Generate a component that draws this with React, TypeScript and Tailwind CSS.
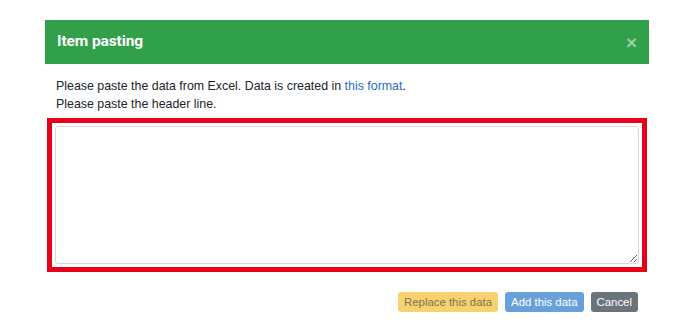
import React from 'react';

export default function App() {
  return (
    <div className="w-[700px] h-[326px] bg-white pl-[45px] pt-[20px] font-['Liberation_Sans',sans-serif]">
      <div className="w-[604px]">
        {/* Header */}
        <div className="h-[44px] bg-[#30a04a] flex items-center justify-between pl-[12px] pr-[12px]">
          <h5 className="text-white text-[15.5px] font-bold font-['Roboto','Liberation_Sans',sans-serif] tracking-[-0.1px]">
            Item pasting
          </h5>
          <button className="text-white/50 text-[19px] font-bold leading-none">
            ×
          </button>
        </div>

        {/* Body */}
        <div className="px-[11px] pt-[13px] text-[12.4px] leading-[18px] text-[#212529]">
          <p>
            Please paste the data from Excel. Data is created in{' '}
            <a href="#" className="text-[#1f6fc5]">this format</a>.
          </p>
          <p>Please paste the header line.</p>
          <div className="mt-[5px] ml-[-9px] mr-[-9px] border-[5px] border-[#e60019] p-[3px]">
            <textarea className="block w-full h-[138px] border border-[#d5d9de] rounded-[3px] bg-white outline-none" />
          </div>
        </div>

        {/* Footer */}
        <div className="flex justify-end gap-[7px] pr-[11px] pt-[20px]">
          <button className="h-[20px] px-[6px] rounded-[3px] bg-[#f8d26e] text-[#7d7452] text-[11.4px] leading-[20px]">
            Replace this data
          </button>
          <button className="h-[20px] px-[6px] rounded-[3px] bg-[#68a1d9] text-white text-[11.4px] leading-[20px]">
            Add this data
          </button>
          <button className="h-[20px] px-[6px] rounded-[3px] bg-[#6b737b] text-white text-[11.4px] leading-[20px]">
            Cancel
          </button>
        </div>
      </div>
    </div>
  );
}
